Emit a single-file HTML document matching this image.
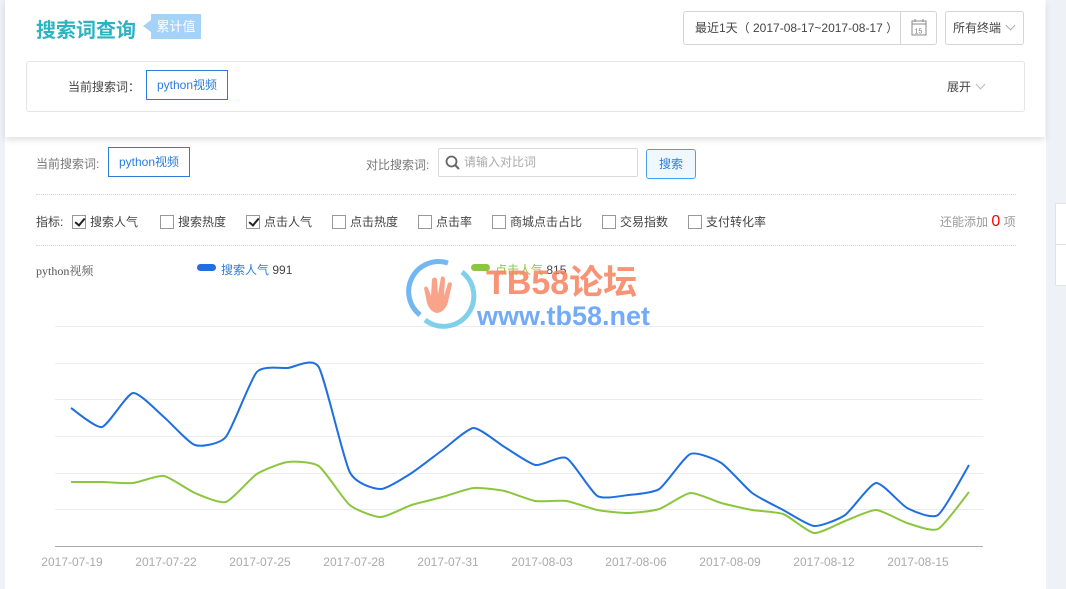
<!DOCTYPE html>
<html><head><meta charset="utf-8"><style>
*{margin:0;padding:0;box-sizing:border-box}
body{width:1066px;height:589px;overflow:hidden;background:#eef1f6;font-family:"Liberation Sans","Noto Sans CJK SC",sans-serif;position:relative;font-size:12px;color:#333}
.main{position:absolute;left:5px;top:0;width:1041px;height:589px;background:#fff}
.top{position:absolute;left:5px;top:0;width:1040px;height:137px;background:#fff;box-shadow:0 3px 6px rgba(0,0,0,.12);z-index:2}
.abs{position:absolute}
.title{left:31px;top:14px;font-size:20px;font-weight:bold;color:#2bb3c4}
.tag{left:146px;top:14px;width:50px;height:25px;background:#a4d2f9;color:#fff;font-size:13px;line-height:25px;text-align:center}
.tag:before{content:"";position:absolute;left:-8px;top:6px;border:6px solid transparent;border-right:8px solid #a4d2f9;border-left:0;}
.date{left:678px;top:11px;width:254px;height:34px;border:1px solid #d5d5d5;border-radius:3px;font-size:12px;line-height:32px;padding-left:11px;color:#444;white-space:nowrap;overflow:hidden}
.date .cal{position:absolute;right:0;top:0;width:36px;height:32px;border-left:1px solid #d5d5d5;background:#fff}
.term{left:940px;top:11px;width:79px;height:34px;border:1px solid #d5d5d5;border-radius:3px;line-height:32px;padding-left:7px;color:#444}
.box{left:21px;top:61px;width:999px;height:51px;border:1px solid #e5e5e5;border-radius:3px}
.kw{border:1px solid #2a7ddc;color:#2a7ddc;font-size:12px;text-align:center}
.chev{display:inline-block;width:7px;height:7px;border-right:1px solid #aaa;border-bottom:1px solid #aaa;transform:rotate(45deg);margin-left:6px;position:relative;top:-3px}
.gray{color:#777}
.dot{left:36px;width:980px;border-top:1px dotted #d6d6d6;height:0}
.cb{display:inline-block;width:14px;height:14px;border:1px solid #999;vertical-align:-3px;margin-right:4px;position:relative;background:#fff}
.cb.on:after{content:"";position:absolute;left:4px;top:0px;width:4px;height:8px;border-right:2px solid #222;border-bottom:2px solid #222;transform:rotate(40deg)}
.ind span.i{position:absolute;top:0;white-space:nowrap;color:#444}
</style></head><body>
<div class="main"></div>
<div class="top">
  <div class="abs title">搜索词查询</div>
  <div class="abs tag">累计值</div>
  <div class="abs date">最近1天（ 2017-08-17~2017-08-17 ）<div class="cal"><svg width="36" height="32"><rect x="11" y="9" width="14" height="14" fill="none" stroke="#888"/><line x1="11" y1="12" x2="25" y2="12" stroke="#888"/><line x1="14" y1="7" x2="14" y2="10" stroke="#888"/><line x1="22" y1="7" x2="22" y2="10" stroke="#888"/><text x="13.5" y="21.5" font-size="7" fill="#777" font-family="Liberation Sans">15</text></svg></div></div>
  <div class="abs term">所有终端<span class="chev"></span></div>
  <div class="abs box">
    <div class="abs" style="left:41px;top:16px;color:#444">当前搜索词：</div>
    <div class="abs kw" style="left:119px;top:8px;width:82px;height:30px;line-height:28px">python视频</div>
    <div class="abs" style="left:920px;top:16px;color:#444">展开<span class="chev" style="border-color:#bbb"></span></div>
  </div>
</div>
<div class="abs gray" style="left:36px;top:155px">当前搜索词:</div>
<div class="abs kw" style="left:108px;top:147px;width:82px;height:30px;line-height:28px">python视频</div>
<div class="abs gray" style="left:366px;top:156px">对比搜索词:</div>
<div class="abs" style="left:438px;top:148px;width:200px;height:29px;border:1px solid #d9d9d9;border-radius:2px;color:#aaa;line-height:27px;padding-left:25px">请输入对比词
<svg class="abs" style="left:6px;top:6px" width="16" height="16"><circle cx="6.5" cy="6.5" r="5" fill="none" stroke="#666" stroke-width="1.8"/><line x1="10" y1="10" x2="14" y2="14" stroke="#666" stroke-width="2"/></svg></div>
<div class="abs" style="left:646px;top:149px;width:50px;height:30px;border:1px solid #4aa0ee;background:#f0f8ff;border-radius:3px;color:#2a7ddc;text-align:center;line-height:28px">搜索</div>
<div class="abs dot" style="top:194px"></div>
<div class="abs ind" style="left:36px;top:213px;width:990px;height:16px">
<span class="i gray" style="left:0">指标:</span>
<span class="i" style="left:36px"><span class="cb on"></span>搜索人气</span>
<span class="i" style="left:124px"><span class="cb"></span>搜索热度</span>
<span class="i" style="left:210px"><span class="cb on"></span>点击人气</span>
<span class="i" style="left:296px"><span class="cb"></span>点击热度</span>
<span class="i" style="left:382px"><span class="cb"></span>点击率</span>
<span class="i" style="left:456px"><span class="cb"></span>商城点击占比</span>
<span class="i" style="left:566px"><span class="cb"></span>交易指数</span>
<span class="i" style="left:652px"><span class="cb"></span>支付转化率</span>
<span class="i gray" style="left:904px;color:#999">还能添加 <span style="color:#f00;font-size:16px">0</span> 项</span>
</div>
<div class="abs dot" style="top:245px"></div>
<div class="abs" style="left:36px;top:262px;font-family:'Liberation Serif','Noto Serif CJK SC',serif;color:#555;font-size:12px">python视频</div>
<div class="abs" style="left:197px;top:264px;width:19px;height:7px;border-radius:4px;background:#1f6fe0"></div>
<div class="abs" style="left:221px;top:261px;color:#2a7ddc">搜索人气 <span style="color:#444">991</span></div>
<div class="abs" style="left:471px;top:264px;width:19px;height:7px;border-radius:4px;background:#8cc63f"></div>
<div class="abs" style="left:495px;top:261px;color:#8cc63f">点击人气 <span style="color:#444">815</span></div>
<svg class="abs" style="left:0;top:0" width="1046" height="589">
<g stroke="#ececec" stroke-width="1">
<line x1="55" y1="326.5" x2="983" y2="326.5"/><line x1="55" y1="363.5" x2="983" y2="363.5"/><line x1="55" y1="399.5" x2="983" y2="399.5"/><line x1="55" y1="436.5" x2="983" y2="436.5"/><line x1="55" y1="473.5" x2="983" y2="473.5"/><line x1="55" y1="509.5" x2="983" y2="509.5"/>
</g>
<line x1="55" y1="546.5" x2="983" y2="546.5" stroke="#aaa"/>
<g fill="#aaa" font-size="12" font-family="Liberation Sans" text-anchor="middle">
<text x="72" y="566">2017-07-19</text><text x="166" y="566">2017-07-22</text><text x="260" y="566">2017-07-25</text><text x="354" y="566">2017-07-28</text><text x="448" y="566">2017-07-31</text><text x="542" y="566">2017-08-03</text><text x="636" y="566">2017-08-06</text><text x="730" y="566">2017-08-09</text><text x="824" y="566">2017-08-12</text><text x="918" y="566">2017-08-15</text>
</g>
<path id="pb" fill="none" stroke="#1f6fe0" stroke-width="2" stroke-linejoin="round"/>
<path id="pg" fill="none" stroke="#8cc63f" stroke-width="2" stroke-linejoin="round"/>
<g opacity=".85">
<path d="M420 315 A30 30 0 0 1 448 263" fill="none" stroke="#5aaaf0" stroke-width="5"/>
<path d="M462 272 A30 30 0 0 1 425 320" fill="none" stroke="#6cc8e8" stroke-width="5"/>
<path d="M427 303 L424 288 Q426 285 428 288 L431 296 L432 279 Q435 276 437 279 L438 294 L441 277 Q444 275 445 279 L444 296 L448 283 Q451 281 452 284 L448 302 Q445 312 437 313 Q430 312 427 303Z" fill="#f7805e" opacity=".85"/>
</g>
<text x="486" y="294" font-size="34" font-weight="bold" fill="#f7805e" fill-opacity=".85" font-family="Liberation Sans,Noto Sans CJK SC,sans-serif">TB58论坛</text>
<text x="477" y="325" font-size="27" font-weight="bold" fill="#5a9cf5" fill-opacity=".85" font-family="Liberation Sans,sans-serif">www.tb58.net</text>
</svg>
<div class="abs" style="left:1055px;top:203px;width:12px;height:83px;border:1px solid #e3e3e3;background:#fff"><div style="border-top:1px solid #e3e3e3;margin-top:40px"></div></div>
<script>
function sm(ys){var x0=71,dx=(969-71)/29,p=ys.map(function(y,i){return[x0+i*dx,y]});var d="M"+p[0][0]+","+p[0][1];
for(var i=0;i<p.length-1;i++){var a=p[i-1]||p[i],b=p[i],c=p[i+1],e=p[i+2]||c,t=0.1;
d+=" C"+(b[0]+(c[0]-a[0])*t).toFixed(1)+","+(b[1]+(c[1]-a[1])*t).toFixed(1)+" "+(c[0]-(e[0]-b[0])*t).toFixed(1)+","+(c[1]-(e[1]-b[1])*t).toFixed(1)+" "+c[0].toFixed(1)+","+c[1];}return d;}
document.getElementById("pb").setAttribute("d",sm([408,427,393,417,445,437,372,368,367,472,489,473,450,428,447,465,458,496,495,489,454,463,493,510,526,515,483,508,515,465]));
document.getElementById("pg").setAttribute("d",sm([482,482,483,476,493,502,474,462,466,505,517,505,497,488,491,501,501,510,513,509,493,503,510,514,533,521,510,523,529,492]));
</script>
</body></html>
